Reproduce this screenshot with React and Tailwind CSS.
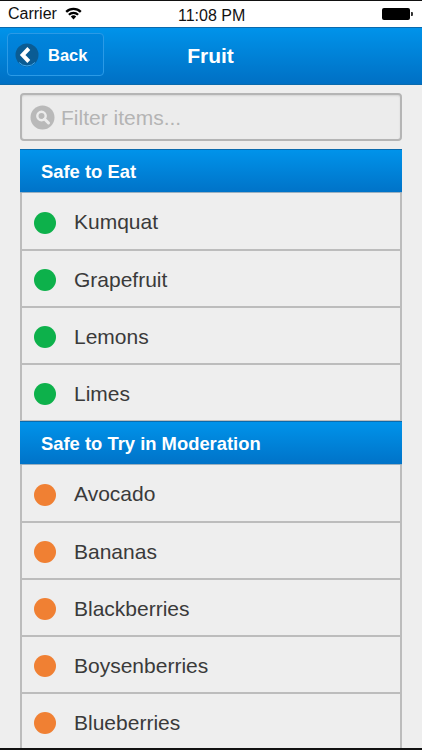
const SANS = "font-['Liberation_Sans','Arial',sans-serif]";

function Wifi() {
  return (
    <svg width="17" height="13" viewBox="0 0 17 13" className="ml-[8px] mt-[-2px]">
      <path d="M0.4 4 A11.6 11.6 0 0 1 16.6 4 L15 5.8 A9.2 9.2 0 0 0 2 5.8 Z" fill="#000" />
      <path d="M3.1 6.9 A7.7 7.7 0 0 1 13.9 6.9 L12.3 8.6 A5.3 5.3 0 0 0 4.7 8.6 Z" fill="#000" />
      <path d="M5.8 9.6 A3.9 3.9 0 0 1 11.2 9.6 L8.5 12.6 Z" fill="#000" />
    </svg>
  );
}

function Battery() {
  return (
    <div className="flex items-center">
      <div className="w-[28px] h-[12px] rounded-[2px] bg-black" />
      <div className="w-[2px] h-[4px] bg-[#333] rounded-r-[1px] ml-[1px]" />
    </div>
  );
}

function StatusBar() {
  return (
    <div className="h-[27px] shrink-0 bg-white border-t-[1px] border-[#111] relative flex items-center justify-between pl-[8px] pr-[9px] text-[#111] text-[16px]">
      <div className="flex items-center">
        <span>Carrier</span>
        <Wifi />
      </div>
      <span className="absolute left-[178px] top-[3px]">11:08 PM</span>
      <Battery />
    </div>
  );
}

function BackIcon() {
  return (
    <svg width="24" height="24" viewBox="0 0 24 24">
      <circle cx="12" cy="12" r="11.5" fill="#0a5c94" />
      <path d="M4 19.5 A11 11 0 0 0 20 19.5" fill="none" stroke="#3ea6ea" strokeWidth="1" />
      <path d="M13.8 5.5 L7.6 12 L13.8 18.5" fill="none" stroke="#fff" strokeWidth="4" />
    </svg>
  );
}

function Header() {
  return (
    <div className="h-[58px] shrink-0 relative flex items-center justify-center border-y border-[#0a6aad] bg-gradient-to-b from-[#0093ea] to-[#0070c4]">
      <button className="absolute left-[7px] top-[5px] w-[97px] h-[43px] flex items-center gap-[9px] pl-[7px] rounded-[4px] border border-[#2b9ae6] bg-gradient-to-b from-[#0085dc] to-[#0079d2] text-white font-bold text-[16.5px]">
        <BackIcon />
        <span className="mt-[1px]">Back</span>
      </button>
      <span className="text-white font-bold text-[21px] mr-[1px] mt-[-1px]">Fruit</span>
    </div>
  );
}

function Search() {
  return (
    <div className="h-[48px] rounded-[4px] border-2 border-[#b5b5b5] bg-[#ececec] shadow-[inset_0_1px_2px_rgba(0,0,0,0.1)] flex items-center pl-[8px] gap-[6px]">
      <svg width="25" height="25" viewBox="0 0 25 25">
        <circle cx="12.5" cy="12.5" r="12" fill="#b9b9b9" />
        <circle cx="11.5" cy="11" r="4.2" fill="none" stroke="#ececec" strokeWidth="2.4" />
        <path d="M14.5 14 L18.5 18" stroke="#ececec" strokeWidth="3" strokeLinecap="round" />
      </svg>
      <span className="text-[#b4b4b4] text-[21px] mt-[1px]">Filter items...</span>
    </div>
  );
}

function SectionHeader({ title }) {
  return (
    <div className="h-[44px] border-t border-[#0a6aad] border-b border-b-[#9ab0c0] bg-gradient-to-b from-[#0093ea] to-[#0073c8] flex items-center pl-[21px] pt-[2px] text-white font-bold text-[18.4px]">
      {title}
    </div>
  );
}

function Row({ name, color, first }) {
  return (
    <div className={`h-[57px] flex items-center pl-[12px] border-x-2 border-b border-x-[#bcbcbc] border-b-[#bcbcbc] ${first ? "" : "border-t border-t-[#bcbcbc]"}`}>
      <div className={`w-[22px] h-[22px] ${first ? "mt-[4px]" : "mt-[3px]"} rounded-full ${color}`} />
      <span className={`ml-[18px] ${first ? "mt-[1px]" : "mt-[2px]"} text-[#3a3a3a] text-[21px]`}>{name}</span>
    </div>
  );
}

const GREEN = ["Kumquat", "Grapefruit", "Lemons", "Limes"];
const ORANGE = ["Avocado", "Bananas", "Blackberries", "Boysenberries", "Blueberries"];

export default function App() {
  return (
    <div className={`w-[422px] h-[750px] overflow-hidden flex flex-col bg-[#eeeeee] border-b-[2px] border-[#111] ${SANS}`}>
      <StatusBar />
      <Header />
      <div className="flex-1 overflow-hidden px-[20px] pt-[8px]">
        <Search />
        <div className="mt-[8px]">
          <SectionHeader title="Safe to Eat" />
          {GREEN.map((n, i) => (
            <Row key={n} name={n} first={i === 0} color="bg-[#0db14b]" />
          ))}
          <SectionHeader title="Safe to Try in Moderation" />
          {ORANGE.map((n, i) => (
            <Row key={n} name={n} first={i === 0} color="bg-[#f08033]" />
          ))}
        </div>
      </div>
    </div>
  );
}
